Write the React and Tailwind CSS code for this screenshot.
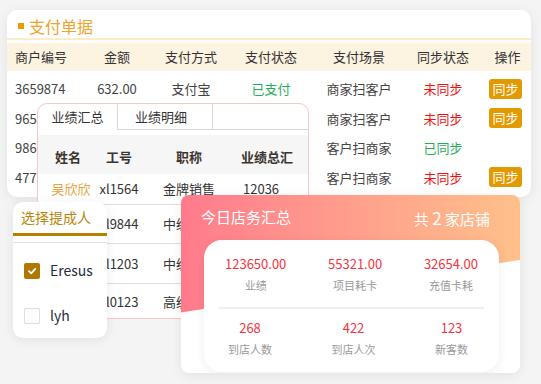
import React from 'react';

const FONT = { fontFamily: '"Noto Sans CJK SC", "Noto Sans", sans-serif' };

const PAY_COLS = 'grid grid-cols-[75px_70px_78px_82px_94px_74px_51px]';

const payRows = [
  { no: '3659874', amt: '632.00', way: '支付宝', st: '已支付', scene: '商家扫客户', sync: false },
  { no: '9658742', amt: '128.00', way: '微信', st: '已支付', scene: '商家扫客户', sync: false },
  { no: '9867452', amt: '560.00', way: '微信', st: '已支付', scene: '客户扫商家', sync: true },
  { no: '4775126', amt: '88.00', way: '支付宝', st: '已支付', scene: '客户扫商家', sync: false },
];

const staff = [
  ['吴欣欣', 'xl1564', '金牌销售', '12036', 'h-[31px]'],
  ['李晓', 'xl9844', '中级销售', '9850', 'h-[39px]'],
  ['王芳', 'xl1203', '中级销售', '8620', 'h-[40px]'],
  ['陈明', 'xl0123', '高级销售', '10240', 'h-[35px]'],
];

function PayCard() {
  return (
    <div className="absolute left-[7px] top-[10px] w-[524px] h-[187px] bg-white rounded-[10px] shadow-[0_2px_12px_rgba(0,0,0,0.08)] overflow-hidden">
      <div className="h-[28px] pt-[4px] pl-[11px] flex items-center gap-[5px]">
        <span className="w-[6px] h-[6px] bg-[#e99c00]" />
        <span className="text-[16px] leading-[20px] text-[#eda32c]">支付单据</span>
      </div>
      <div className="h-[2px] bg-[#fdebc6]" />
      <div className={`${PAY_COLS} mt-[3px] h-[28px] bg-[#fdf3e1] items-center text-[13px] text-[#333]`}>
        <span className="pl-[8px]">商户编号</span>
        <span className="text-center">金额</span>
        <span className="text-center">支付方式</span>
        <span className="text-center">支付状态</span>
        <span className="text-center">支付场景</span>
        <span className="text-center">同步状态</span>
        <span className="text-center pl-[4px]">操作</span>
      </div>
      <div className="mt-[3px]">
        {payRows.map(r => (
          <div key={r.no} className={`${PAY_COLS} h-[29.5px] items-center text-[13px] text-[#444]`}>
            <span className="pl-[8px]">{r.no}</span>
            <span className="text-center">{r.amt}</span>
            <span className="text-center">{r.way}</span>
            <span className="text-center text-[#1fae5b]">{r.st}</span>
            <span className="text-center">{r.scene}</span>
            <span className={`text-center ${r.sync ? 'text-[#1fae5b]' : 'text-[#ee1111]'}`}>{r.sync ? '已同步' : '未同步'}</span>
            <span className="flex justify-center">
              {!r.sync && <span className="px-[3px] h-[20px] leading-[20px] rounded-[3px] bg-[#e39a00] text-white text-[13px]">同步</span>}
            </span>
          </div>
        ))}
      </div>
    </div>
  );
}

function StaffCard() {
  return (
    <div className="absolute left-[37px] top-[103px] w-[272px] h-[216px] bg-white border border-[#fbc6c6] rounded-[10px] overflow-hidden">
      <div className="flex h-[26px] text-[13px] text-[#333]">
        <div className="w-[80px] border-r border-[#d8d8d8] flex items-center justify-center">业绩汇总</div>
        <div className="w-[95px] border-r border-b border-[#d8d8d8] flex items-center justify-center pr-[8px]">业绩明细</div>
        <div className="flex-1 border-b border-[#d8d8d8]" />
      </div>
      <div className="mt-[5px] h-[39px] bg-[#f6f6f6] grid grid-cols-[60px_42px_98px_1fr] items-center pt-[4px] text-[13px] font-semibold text-[#3a3530]">
        <span className="text-center">姓名</span>
        <span className="text-center">工号</span>
        <span className="text-center">职称</span>
        <span className="pl-[3px]">业绩总汇</span>
      </div>
      {staff.map(([n, id, t, v, h], i) => (
        <div key={id} className={`grid grid-cols-[60px_42px_98px_1fr] items-center ${h} ${i < 3 ? 'border-b border-[#dedede]' : ''} text-[13px] text-[#333]`}>
          <span className={`text-center pl-[6px] ${i === 0 ? 'text-[#e8a33a]' : ''}`}>{n}</span>
          <span className="text-center">{id}</span>
          <span className="text-center">{t}</span>
          <span className="pl-[5px]">{v}</span>
        </div>
      ))}
    </div>
  );
}

function CheckIcon() {
  return (
    <svg width="10" height="10" viewBox="0 0 10 10">
      <path d="M2 5.2 L4.2 7.3 L8.2 2.8" fill="none" stroke="white" strokeWidth="1.8" strokeLinecap="round" strokeLinejoin="round" />
    </svg>
  );
}

function PickCard() {
  return (
    <div className="absolute left-[13px] top-[202px] w-[94px] h-[136px] bg-white rounded-[10px] shadow-[0_2px_12px_rgba(0,0,0,0.08)] overflow-hidden">
      <div className="h-[34px] pl-[8px] flex items-center border-b-[3px] border-[#b38000] text-[14px] text-[#b8860b]">选择提成人</div>
      <div className="mt-[6px] border-t border-[#dde3ea]" />
      <div className="pt-[5px]">
        {[['Eresus', true], ['lyh', false]].map(([name, on]) => (
          <div key={name} className="h-[45px] pl-[11px] flex items-center gap-[10px]">
            <span className={`w-[16px] h-[16px] rounded-[2px] flex items-center justify-center ${on ? 'bg-[#b07800]' : 'border border-[#dcdfe6] bg-white'}`}>
              {on && <CheckIcon />}
            </span>
            <span className="text-[14px] text-[#1f2d3d]">{name}</span>
          </div>
        ))}
      </div>
    </div>
  );
}

function Stat({ v, l }) {
  return (
    <div className="flex flex-col items-center">
      <span className="h-[18px] leading-[18px] text-[13px] text-[#f53340]">{v}</span>
      <span className="mt-[4px] h-[16px] leading-[16px] text-[11px] text-[#999]">{l}</span>
    </div>
  );
}

function StoreCard() {
  return (
    <div className="absolute left-[181px] top-[195px] w-[339px] h-[178px] bg-white rounded-[8px] shadow-[0_2px_12px_rgba(0,0,0,0.08)] overflow-hidden">
      <div className="absolute inset-0 bg-gradient-to-r from-[#ff7a8c] to-[#ffc08a] [clip-path:polygon(0_0,100%_0,100%_36.5%,0_66%)]" />
      <div className="relative h-[45px] pl-[20px] pr-[30px] flex items-center justify-between text-white text-[15px]">
        <span>今日店务汇总</span>
        <span>共 <span className="text-[17px]">2</span> 家店铺</span>
      </div>
      <div className="relative ml-[23px] mr-[21px] h-[132px] bg-white rounded-[18px] shadow-[0_2px_10px_rgba(0,0,0,0.07)]">
        <div className="pt-[15px] pl-[21px] pr-[21px] flex justify-between">
          <Stat v="123650.00" l="业绩" />
          <Stat v="55321.00" l="项目耗卡" />
          <Stat v="32654.00" l="充值卡耗" />
        </div>
        <div className="mt-[14px] mx-[15px] h-[2px] bg-[#efefef]" />
        <div className="mt-[10px] pl-[24px] pr-[31px] flex justify-between">
          <Stat v="268" l="到店人数" />
          <Stat v="422" l="到店人次" />
          <Stat v="123" l="新客数" />
        </div>
      </div>
    </div>
  );
}

export default function App() {
  return (
    <div style={FONT} className="relative w-[541px] h-[384px] bg-[#f4f4f4] overflow-hidden">
      <PayCard />
      <StaffCard />
      <PickCard />
      <StoreCard />
    </div>
  );
}
